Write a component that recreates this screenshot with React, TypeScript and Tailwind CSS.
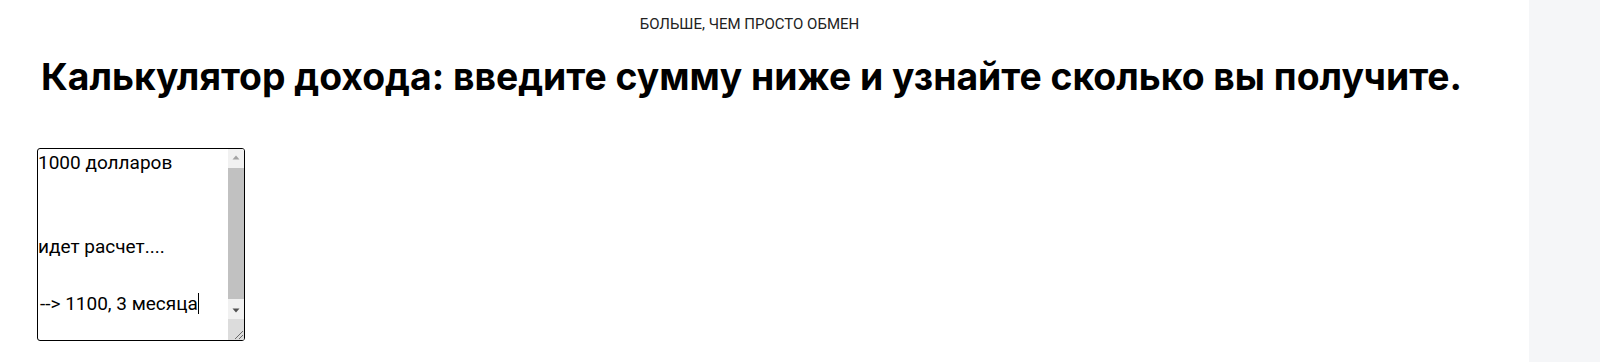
import React from "react";

const LINES = ["1000 долларов", "", "", "идет расчет....", "", "--> 1100, 3 месяца"];

function Triangle({ up, color }: { up: boolean; color: string }) {
  return (
    <svg width="8" height="5" viewBox="0 0 8 5" aria-hidden="true">
      {up ? <path d="M4 0.5 L7.5 4.5 L0.5 4.5 Z" fill={color} /> : <path d="M0.5 0.5 L7.5 0.5 L4 4.5 Z" fill={color} />}
    </svg>
  );
}

function FakeTextarea() {
  return (
    <div
      role="textbox"
      aria-multiline="true"
      className="ml-px mt-[49px] flex h-[193px] w-[208px] overflow-hidden rounded-[3px] border border-black bg-white"
    >
      <div className="flex-1 whitespace-pre font-['Roboto',sans-serif] text-[19px] leading-[28px] text-black">
        {LINES.map((l, i) => {
          const last = i === LINES.length - 1;
          return (
            <div key={i} className={last ? "h-[28px] pl-[2px]" : "h-[28px]"}>
              {l}
              {last && (
                <span className="inline-block h-[21px] w-px translate-y-[4px] bg-black align-baseline" />
              )}
            </div>
          );
        })}
      </div>
      <div className="flex w-[16px] shrink-0 flex-col bg-[#f1f1f1]">
        <div className="flex h-[17px] items-center justify-center">
          <Triangle up color="#a3a3a3" />
        </div>
        <div className="flex flex-1 flex-col pb-[3px] pt-[2px]">
          <div className="flex-1 bg-[#c1c1c1]" />
        </div>
        <div className="flex h-[17px] items-center justify-center">
          <Triangle up={false} color="#505050" />
        </div>
        <div className="flex h-[21px] items-end justify-end bg-[#dcdcdc]">
          <svg width="12" height="12" viewBox="0 0 12 12" aria-hidden="true">
            <path d="M11 3 L3 11 M11 7 L7 11" stroke="#6b6b6b" strokeWidth="1" fill="none" />
          </svg>
        </div>
      </div>
    </div>
  );
}

export default function App() {
  return (
    <div className="flex min-h-[362px] w-full bg-white">
      <main className="flex-1 pl-9 pr-[66px] pt-[16px] text-black">
        <p className="text-center font-['Roboto',sans-serif] text-[15px] leading-[16px] text-[#222]">
          БОЛЬШЕ, ЧЕМ ПРОСТО ОБМЕН
        </p>
        <h1 className="mt-[22px] pl-[5px] font-['Inter',sans-serif] text-[37.3px] font-bold leading-[45px] text-black">
          Калькулятор дохода: введите сумму ниже и узнайте сколько вы получите.
        </h1>
        <FakeTextarea />
      </main>
      <aside className="w-[71px] shrink-0 bg-[#f5f6f8]" />
    </div>
  );
}
